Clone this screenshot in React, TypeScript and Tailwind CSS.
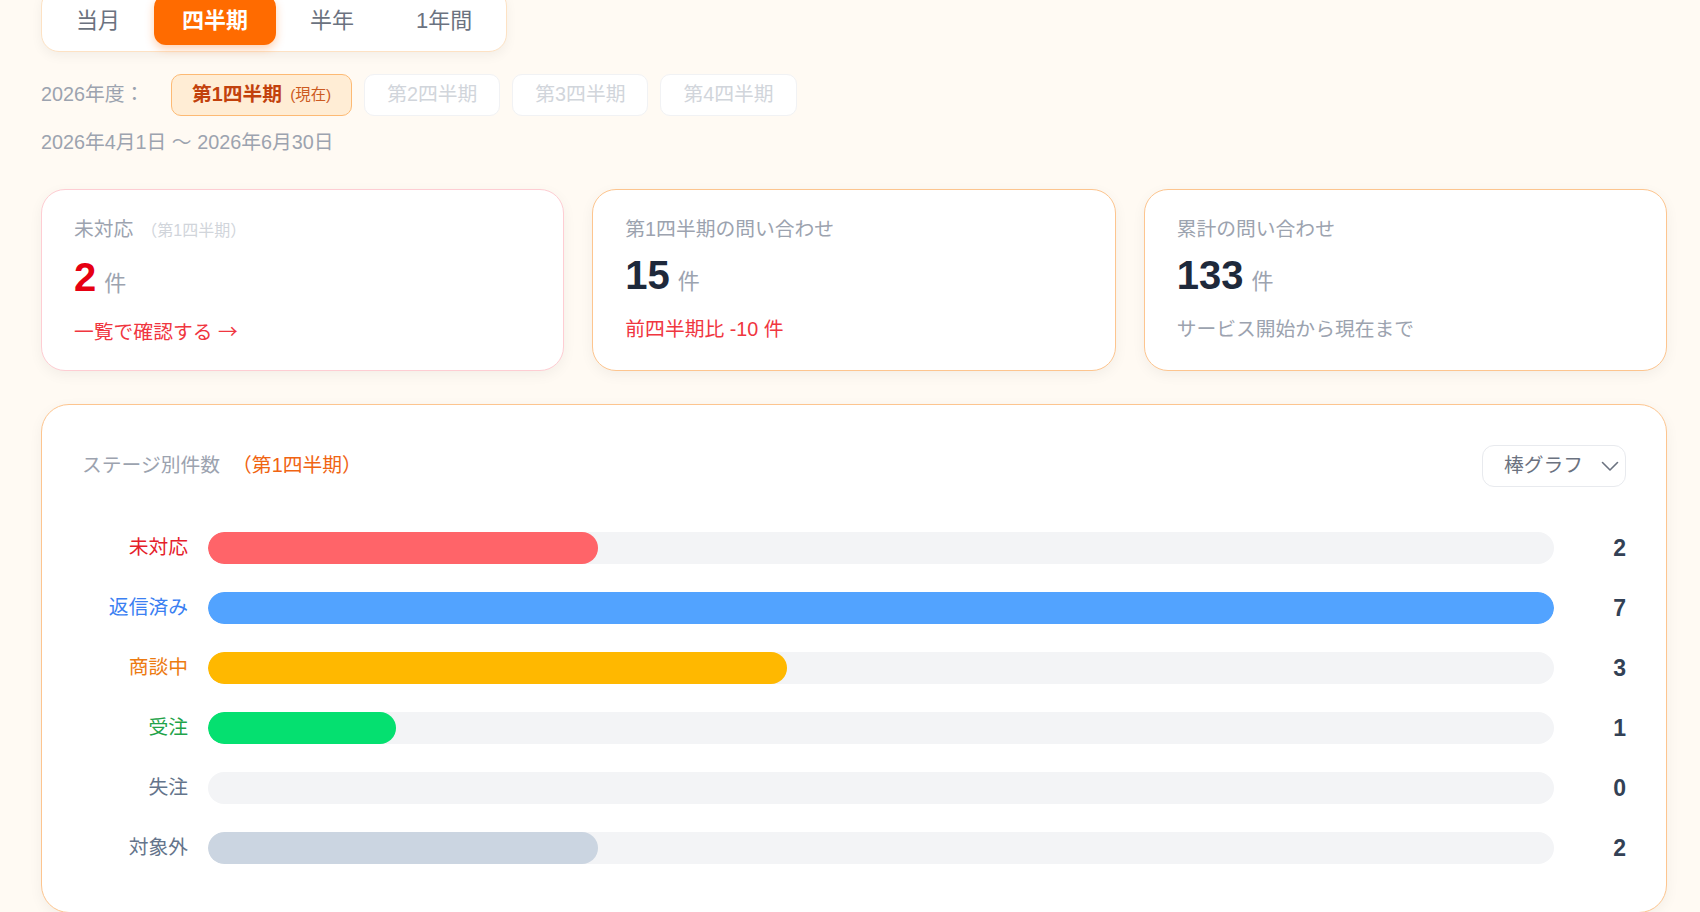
import React from "react";

const FONT = "font-['Liberation_Sans','Noto_Sans_CJK_JP',sans-serif]";

type Stage = { label: string; count: number; labelColor: string; barColor: string };

const stages: Stage[] = [
  { label: "未対応", count: 2, labelColor: "text-[#e5202a]", barColor: "bg-[#ff6469]" },
  { label: "返信済み", count: 7, labelColor: "text-[#3b7ff2]", barColor: "bg-[#52a3ff]" },
  { label: "商談中", count: 3, labelColor: "text-[#ec7b12]", barColor: "bg-[#ffb800]" },
  { label: "受注", count: 1, labelColor: "text-[#1fa34a]", barColor: "bg-[#05e070]" },
  { label: "失注", count: 0, labelColor: "text-[#64748b]", barColor: "bg-[#cbd5e1]" },
  { label: "対象外", count: 2, labelColor: "text-[#64748b]", barColor: "bg-[#cbd5e1]" },
];
const MAX = 7;

const periods = ["当月", "四半期", "半年", "1年間"];
const quarters = ["第2四半期", "第3四半期", "第4四半期"];

function StatCard({
  border,
  label,
  sub,
  value,
  valueColor,
  footer,
  footerColor,
}: {
  border: string;
  label: string;
  sub?: string;
  value: string;
  valueColor: string;
  footer: React.ReactNode;
  footerColor: string;
}) {
  return (
    <div
      className={`rounded-3xl border ${border} bg-white px-8 pt-[25px] pb-[24px] shadow-[0_4px_14px_rgba(0,0,0,0.05)]`}
    >
      <div className="flex items-baseline leading-7">
        <span className="text-[19.8px] text-[#9ca3af]">{label}</span>
        {sub && <span className="ml-2 text-[16px] text-[#d1d5db]">{sub}</span>}
      </div>
      <div className="mt-3 flex items-baseline">
        <span className={`text-[40px] font-bold leading-none ${valueColor}`}>{value}</span>
        <span className="ml-2 text-[22px] leading-none text-[#9ca3af]">件</span>
      </div>
      <div className={`mt-5 text-[19.8px] leading-7 ${footerColor}`}>{footer}</div>
    </div>
  );
}

export default function App() {
  return (
    <div className={`flex min-h-screen flex-col bg-[#fffaf3] pl-[41px] pr-[33px] pb-10 ${FONT}`}>
      {/* period toggle */}
      <div className="mt-[-12px] flex gap-1.5 self-start rounded-[18px] border border-[#fde2c4] bg-white p-1.5 shadow-[0_4px_12px_rgba(0,0,0,0.05)]">
        {periods.map((p) => {
          const active = p === "四半期";
          return (
            <div
              key={p}
              className={`flex h-[50px] items-center justify-center rounded-xl px-7 text-[22px] ${
                active
                  ? "bg-[#ff6b00] font-bold text-white shadow-[0_4px_10px_rgba(255,107,0,0.3)]"
                  : "text-[#6b7280]"
              }`}
            >
              {p}
            </div>
          );
        })}
      </div>

      {/* fiscal year quarters */}
      <div className="mt-[22px] flex items-center">
        <span className="w-[130px] shrink-0 text-[19.8px] text-[#9ca3af]">2026年度：</span>
        <div className="flex gap-[12px]">
          <div className="flex h-[42px] items-center rounded-[10px] border border-[#fdba74] bg-[#ffedd5] px-[20px]">
            <span className="text-[19.8px] font-bold text-[#c2410c]">第1四半期</span>
            <span className="ml-2 text-[15.4px] text-[#cc5a1f]">(現在)</span>
          </div>
          {quarters.map((q) => (
            <div
              key={q}
              className="flex h-[42px] items-center rounded-[10px] border border-[#f1f2f4] bg-white px-[22px] text-[19.8px] text-[#d1d5db]"
            >
              {q}
            </div>
          ))}
        </div>
      </div>

      <div className="mt-3 text-[19.8px] leading-7 text-[#9ca3af]">2026年4月1日 〜 2026年6月30日</div>

      {/* stat cards */}
      <div className="mt-[33px] grid grid-cols-3 gap-7">
        <StatCard
          border="border-[#fecdd3]"
          label="未対応"
          sub="（第1四半期）"
          value="2"
          valueColor="text-[#e60012]"
          footer={
            <>
              一覧で確認する <span className="font-['Noto_Sans_CJK_JP',sans-serif]">→</span>
            </>
          }
          footerColor="text-[#f0363f]"
        />
        <StatCard
          border="border-[#fdc58f]"
          label="第1四半期の問い合わせ"
          value="15"
          valueColor="text-[#1e293b]"
          footer="前四半期比 -10 件"
          footerColor="text-[#f0363f]"
        />
        <StatCard
          border="border-[#fdc58f]"
          label="累計の問い合わせ"
          value="133"
          valueColor="text-[#1e293b]"
          footer="サービス開始から現在まで"
          footerColor="text-[#9ca3af]"
        />
      </div>

      {/* chart card */}
      <div className="mt-[33px] rounded-[28px] border border-[#fdc58f] bg-white px-10 pt-10 pb-12 shadow-[0_4px_14px_rgba(0,0,0,0.05)]">
        <div className="flex items-center justify-between">
          <div className="flex items-center text-[19.8px]">
            <span className="text-[#9ca3af]">ステージ別件数</span>
            <span className="ml-3 text-[#f06412]">（第1四半期）</span>
          </div>
          <div className="flex h-[42px] w-[144px] items-center justify-between rounded-xl border border-[#e8eaee] bg-white pl-[21px] pr-[6px]">
            <span className="text-[19.8px] text-[#6b7280]">棒グラフ</span>
            <svg width="18" height="11" viewBox="0 0 18 11" fill="none">
              <path d="M1.5 1.5L9 9L16.5 1.5" stroke="#6b7280" strokeWidth="1.6" strokeLinecap="round" strokeLinejoin="round" />
            </svg>
          </div>
        </div>

        <div className="mt-[45px] flex flex-col gap-7">
          {stages.map((s) => (
            <div key={s.label} className="flex h-8 items-center">
              <div className={`w-[106px] text-right text-[19.8px] ${s.labelColor}`}>{s.label}</div>
              <div className="ml-5 h-8 flex-1 overflow-hidden rounded-full bg-[#f3f4f6]">
                <div
                  className={`h-full rounded-full ${s.barColor}`}
                  style={{ width: `${Math.round((s.count / MAX) * 100)}%` }}
                />
              </div>
              <div className="w-[72px] text-right text-[23px] font-bold text-[#334155]">{s.count}</div>
            </div>
          ))}
        </div>
      </div>
    </div>
  );
}
